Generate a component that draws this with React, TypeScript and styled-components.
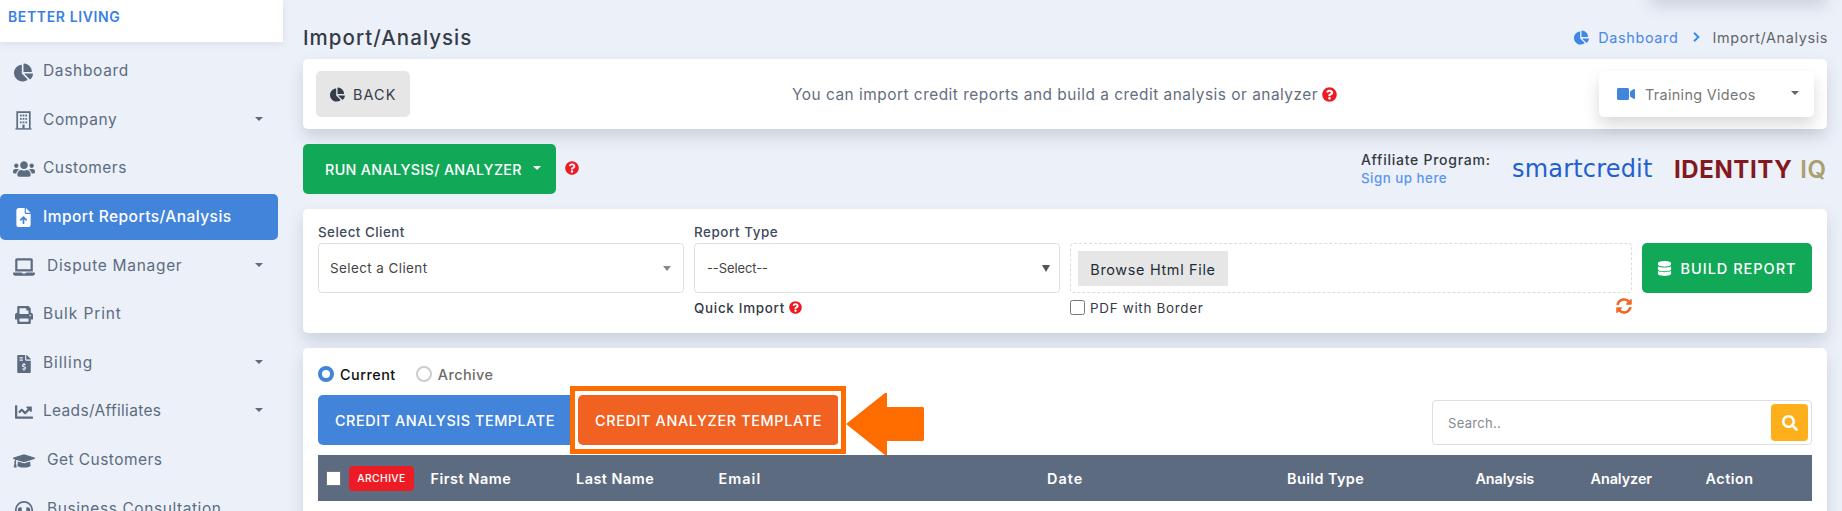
import React from 'react';
import styled, { createGlobalStyle, css } from 'styled-components';
import {
  FaChartLine, FaChartPie, FaDatabase, FaFileInvoiceDollar, FaGraduationCap,
  FaHeadset, FaLaptop, FaPrint, FaQuestionCircle, FaSearch, FaSyncAlt, FaUsers, FaVideo,
} from 'react-icons/fa';
import { FaFileArrowUp } from 'react-icons/fa6';

const Global = createGlobalStyle`
  *, *::before, *::after { box-sizing: border-box; }
  html, body { margin: 0; height: 100%; overflow: hidden; background: #ecf1f9; }
  body { font-family: Inter, "Liberation Sans", sans-serif; }
  button, input { font: inherit; margin: 0; }
  svg { display: block; flex: none; }
`;

const slate = '#5c6b80';
const blue = '#4384db';

interface TextProps { $size: number; $ls?: number; $weight?: number; $color?: string; }
const Text = styled.span<TextProps>`
  font-size: ${p => p.$size}px;
  letter-spacing: ${p => p.$ls ?? 0}px;
  font-weight: ${p => p.$weight ?? 400};
  color: ${p => p.$color ?? 'inherit'};
  white-space: nowrap;
`;

const Page = styled.div`
  position: relative;
  display: flex;
  width: 1842px;
  height: 511px;
  overflow: hidden;
`;

const TopShade = styled.div`
  position: absolute;
  top: -22px;
  left: 1650px;
  width: 176px;
  height: 20px;
  box-shadow: 0 8px 16px rgba(20, 30, 50, 0.15);
`;

const Sidebar = styled.aside`
  width: 283px;
  flex: none;
`;
const Brand = styled.div`
  height: 42px;
  padding: 8px 0 0 8px;
  line-height: 16px;
  background: #fff;
  box-shadow: 0 2px 8px rgba(0, 0, 0, 0.08);
`;
const Nav = styled.nav`
  display: flex;
  flex-direction: column;
  gap: 2.6px;
  padding-top: 6.2px;
`;
const NavItem = styled.a<{ $active?: boolean }>`
  display: flex;
  align-items: center;
  width: 278px;
  height: 46px;
  flex: none;
  padding: 0 15px 1px 12px;
  color: ${slate};
  ${p => p.$active && css`
    color: #fff;
    background: ${blue};
    border-radius: 5px;
  `}
`;
const NavIcon = styled.span<{ $gap: number }>`
  display: flex;
  justify-content: center;
  width: 23px;
  margin: 3px ${p => p.$gap}px 0 0;
`;
const Caret = styled.i<{ $w: number; $h: number; $color: string }>`
  width: 0;
  height: 0;
  flex: none;
  border: solid transparent;
  border-width: ${p => p.$h}px ${p => p.$w / 2}px 0;
  border-top-color: ${p => p.$color};
`;
const NavCaret = styled(Caret)`
  margin: -1px 0 0 auto;
`;

const Main = styled.main`
  width: 1544px;
  margin-right: 15px;
  padding-left: 20px;
  flex: none;
  display: flex;
  flex-direction: column;
  gap: 15px;
  > * { flex: none; }
`;
const TitleRow = styled.header`
  display: flex;
  align-items: center;
  justify-content: space-between;
  height: 59px;
  padding-top: 15px;
  margin-bottom: -15px;
`;
const Crumbs = styled.div`
  display: flex;
  align-items: center;
  margin-right: -1px;
  color: #5f646b;
  svg { color: #3d86ea; }
`;
const CrumbLink = styled(Text)`
  margin-left: 9px;
`;
const Chevron = styled.svg`
  margin: -1px 12px 0 15px;
`;
const Card = styled.section`
  background: #fff;
  border-radius: 5px;
  box-shadow: 0 8px 16px rgba(20, 30, 50, 0.15);
`;
const IntroCard = styled(Card)`
  display: flex;
  align-items: center;
  height: 70px;
  padding: 0 13px;
`;
const BackButton = styled.button`
  display: flex;
  align-items: center;
  gap: 8px;
  width: 94px;
  height: 46px;
  padding: 0 0 0 14px;
  border: 0;
  border-radius: 5px;
  background: #e6e6e6;
  color: #343c48;
`;
const Intro = styled.div`
  display: flex;
  align-items: center;
  gap: 4px;
  margin-left: 382px;
  color: #646e7d;
`;
const Help = styled(FaQuestionCircle)`
  color: #ed1c24;
`;
const VideosButton = styled.button`
  display: flex;
  align-items: center;
  width: 215px;
  height: 46px;
  margin-left: auto;
  padding: 0 15px 0 18px;
  border: 0;
  border-radius: 5px;
  background: #fff;
  color: #777;
  box-shadow: 0 8px 16px rgba(0, 0, 0, 0.15);
  svg { margin-right: 10px; color: ${blue}; }
  i { margin: -2px 0 0 auto; }
`;

const RunRow = styled.div`
  display: flex;
  align-items: center;
  height: 50px;
`;
const Solid = styled.button<{ $bg: string; $w: number }>`
  display: flex;
  align-items: center;
  justify-content: center;
  width: ${p => p.$w}px;
  height: 50px;
  flex: none;
  padding: 0;
  border: 0;
  border-radius: 5px;
  background: ${p => p.$bg};
  color: #fff;
`;
const RunButton = styled(Solid)`
  gap: 11px;
  padding-left: 7px;
  i { margin-top: -2px; }
`;
const AnalysisButton = styled(Solid)`
  padding-right: 6px;
`;
const RunHelp = styled(Help)`
  margin: -2px 0 0 9px;
`;
const Affiliate = styled.div`
  display: flex;
  flex-direction: column;
  margin-left: auto;
  width: 151px;
  line-height: 19px;
`;
const SmartCredit = styled(Text)`
  width: 162px;
  font-family: "DejaVu Sans", sans-serif;
`;
const IdentityLogo = styled.div`
  display: flex;
  gap: 8px;
  width: 153px;
`;

const FormCard = styled(Card)`
  display: flex;
  height: 124px;
  padding: 17px 15px 0;
`;
const Field = styled.div<{ $w: number; $mr: number }>`
  width: ${p => p.$w}px;
  margin-right: ${p => p.$mr}px;
  flex: none;
`;
const FieldLabel = styled.div`
  display: flex;
  height: 17px;
  line-height: 12px;
`;
const Select = styled.div<{ $pl: number; $pr: number }>`
  display: flex;
  align-items: center;
  justify-content: space-between;
  height: 50px;
  padding: 0 ${p => p.$pr}px 0 ${p => p.$pl}px;
  border: 1px solid #dfdfdf;
  border-radius: 4px;
  color: #444;
`;
const Below = styled.div<{ $gap: number }>`
  display: flex;
  align-items: center;
  gap: ${p => p.$gap}px;
  height: 29px;
  color: #343a46;
`;
const DropZone = styled.div`
  height: 50px;
  padding: 7px;
  border: 1px dashed #dcdcdc;
  border-radius: 4px;
`;
const Browse = styled.button`
  display: block;
  width: 150px;
  height: 35px;
  padding: 0;
  border: 0;
  background: #e6e6e6;
  color: #212b36;
`;
const Check = styled.span<{ $border: string; $radius: number }>`
  width: 15px;
  height: 15px;
  flex: none;
  border: 1px solid ${p => p.$border};
  border-radius: ${p => p.$radius}px;
  background: #fff;
`;
const RefreshIcon = styled(FaSyncAlt)`
  margin: -3px 0 0 auto;
  color: #f26522;
`;
const BuildButton = styled(Solid)`
  margin-top: 17px;
  gap: 8px;
`;

const ListCard = styled(Card)`
  height: 300px;
  padding: 17px 15px 0;
`;
const Radios = styled.div`
  display: flex;
  align-items: center;
  height: 18px;
`;
const Radio = styled.span<{ $on?: boolean; $ml?: number }>`
  width: 16px;
  height: 16px;
  margin: 0 6px 0 ${p => p.$ml ?? 0}px;
  border: ${p => (p.$on ? '4px solid ' + blue : '2px solid #ccc')};
  border-radius: 50%;
`;
const Tools = styled.div`
  display: flex;
  align-items: flex-start;
  height: 50px;
  margin-top: 12px;
`;
const Highlight = styled.div`
  position: relative;
`;
const Frame = styled.div`
  position: absolute;
  top: -9px;
  left: -8px;
  width: 276px;
  height: 68px;
  border: 5px solid #ff6c00;
  box-shadow: inset 0 0 0 3px #fff;
`;
const Arrow = styled.svg`
  position: absolute;
  top: -2px;
  left: 268px;
`;
const SearchBox = styled.div`
  display: flex;
  align-items: center;
  justify-content: space-between;
  width: 380px;
  height: 45px;
  margin: 5px 0 0 auto;
  padding: 0 3px 0 15px;
  border: 1px solid #dfdfdf;
  border-radius: 4px;
  color: #848a90;
`;
const SearchButton = styled.button`
  display: grid;
  place-items: center;
  width: 37px;
  height: 37px;
  padding: 0;
  border: 0;
  border-radius: 4px;
  background: #fdb01c;
  color: #fff;
`;
const HeadRow = styled.div`
  display: grid;
  grid-template-columns: 112.5px 145.5px 142.5px 328.5px 240px 188.5px 115px 115px auto;
  align-items: center;
  height: 46px;
  margin-top: 10px;
  background: ${slate};
  color: #fff;
`;
const PickCell = styled.div`
  display: flex;
  align-items: center;
  gap: 8px;
  padding-left: 8px;
`;
const ArchiveTag = styled.button`
  display: flex;
  align-items: center;
  justify-content: center;
  width: 65px;
  height: 25px;
  padding: 0;
  border: 0;
  border-radius: 4px;
  background: #ed1c24;
  color: #fff;
`;

const BuildingIcon = () => (
  <svg width="17" height="19" viewBox="0 0 17 19" fill="none" stroke="currentColor">
    <path d="M0.5 17.9h16" strokeWidth="1.4" />
    <path d="M2.2 17.5V1.2h12.6v16.3" strokeWidth="1.7" />
    <path d="M5.8 3.6v8.8M8.5 3.6v8.8M11.2 3.6v8.8" strokeWidth="1.7" strokeDasharray="1.8 1.6" />
    <path d="M8.5 13.6v4" strokeWidth="2.2" />
  </svg>
);

type Entry = { label: string; icon: React.ReactNode; ls: number; caret?: boolean; active?: boolean; wide?: boolean };
const entries: Entry[] = [
  { label: 'Dashboard', icon: <FaChartPie size={19} />, ls: 0.66 },
  { label: 'Company', icon: <BuildingIcon />, ls: 0.6, caret: true },
  { label: 'Customers', icon: <FaUsers size={22} />, ls: 0.48 },
  { label: 'Import Reports/Analysis', icon: <FaFileArrowUp size={19} />, ls: 0.45, active: true },
  { label: 'Dispute Manager', icon: <FaLaptop size={22} />, ls: 0.69, caret: true, wide: true },
  { label: 'Bulk Print', icon: <FaPrint size={18} />, ls: 0.89 },
  { label: 'Billing', icon: <FaFileInvoiceDollar size={18} />, ls: 0.9, caret: true },
  { label: 'Leads/Affiliates', icon: <FaChartLine size={18} />, ls: 0.32, caret: true },
  { label: 'Get Customers', icon: <FaGraduationCap size={22} />, ls: 0.45, wide: true },
  { label: 'Business Consultation', icon: <FaHeadset size={18} />, ls: 0.58, wide: true },
];

const columns: [string, number][] = [
  ['First Name', 0.56], ['Last Name', 0.51], ['Email', 1.05], ['Date', 1.06],
  ['Build Type', 0.42], ['Analysis', -0.1], ['Analyzer', -0.06], ['Action', 0.5],
];

export default function App() {
  return (
    <Page>
      <Global />
      <TopShade />
      <Sidebar>
        <Brand><Text $size={14} $ls={0.62} $weight={600} $color="#3a80e4">BETTER LIVING</Text></Brand>
        <Nav>
          {entries.map(e => (
            <NavItem key={e.label} $active={e.active}>
              <NavIcon $gap={e.wide ? 12 : 8}>{e.icon}</NavIcon>
              <Text $size={15.5} $ls={e.ls} $weight={e.active ? 500 : 400}>{e.label}</Text>
              {e.caret && <NavCaret $w={9} $h={4.5} $color={slate} />}
            </NavItem>
          ))}
        </Nav>
      </Sidebar>

      <Main>
        <TitleRow>
          <Text $size={20.5} $ls={1.02} $weight={500} $color="#343c48">Import/Analysis</Text>
          <Crumbs>
            <FaChartPie size={15} />
            <CrumbLink as="a" $size={14.4} $ls={0.68} $color="#4a86e8">Dashboard</CrumbLink>
            <Chevron width="7" height="10" viewBox="0 0 7 10" fill="none" stroke="currentColor" strokeWidth="1.9">
              <path d="M1 0.8 5.4 5 1 9.2" />
            </Chevron>
            <Text $size={14.4} $ls={0.64}>Import/Analysis</Text>
          </Crumbs>
        </TitleRow>

        <IntroCard>
          <BackButton><FaChartPie size={15} /><Text $size={14.4} $ls={1.13}>BACK</Text></BackButton>
          <Intro>
            <Text $size={15.4} $ls={0.51}>You can import credit reports and build a credit analysis or analyzer</Text>
            <Help size={15} />
          </Intro>
          <VideosButton>
            <FaVideo size={18} />
            <Text $size={14.4} $ls={0.33}>Training Videos</Text>
            <Caret $w={9} $h={4.5} $color="#666" />
          </VideosButton>
        </IntroCard>

        <RunRow>
          <RunButton $bg="#11a958" $w={253}>
            <Text $size={14.3} $ls={0.32} $weight={500}>RUN ANALYSIS/ ANALYZER</Text>
            <Caret $w={8} $h={4} $color="#fff" />
          </RunButton>
          <RunHelp size={14} />
          <Affiliate>
            <Text $size={14} $ls={0.74} $weight={500} $color="#343a40">Affiliate Program:</Text>
            <Text as="a" $size={13.3} $ls={0.51} $weight={500} $color="#5b95ec">Sign up here</Text>
          </Affiliate>
          <SmartCredit $size={24} $ls={0.19} $color="#2160cd">smartcredit</SmartCredit>
          <IdentityLogo>
            <Text $size={24} $ls={0.6} $weight={700} $color="#841820">IDENTITY</Text>
            <Text $size={24} $ls={0.5} $weight={600} $color="#ab9e70">IQ</Text>
          </IdentityLogo>
        </RunRow>

        <FormCard>
          <Field $w={366} $mr={10}>
            <FieldLabel><Text $size={13.4} $ls={0.47} $weight={500} $color="#3d4a5e">Select Client</Text></FieldLabel>
            <Select $pl={11} $pr={12}>
              <Text $size={13.4} $ls={0.44}>Select a Client</Text>
              <Caret $w={8} $h={5} $color="#888" />
            </Select>
          </Field>
          <Field $w={366} $mr={10}>
            <FieldLabel><Text $size={13.4} $ls={0.56} $weight={500} $color="#3d4a5e">Report Type</Text></FieldLabel>
            <Select $pl={12} $pr={9}>
              <Text $size={13} $ls={-0.11}>--Select--</Text>
              <Caret $w={8} $h={7} $color="#555" />
            </Select>
            <Below $gap={4}>
              <Text $size={13.4} $ls={0.72} $weight={500}>Quick Import</Text>
              <Help size={13} />
            </Below>
          </Field>
          <Field $w={562} $mr={10}>
            <FieldLabel />
            <DropZone><Browse><Text $size={14.4} $ls={0.68}>Browse Html File</Text></Browse></DropZone>
            <Below $gap={5}>
              <Check $border="#767676" $radius={2.5} />
              <Text $size={13.4} $ls={0.71}>PDF with Border</Text>
              <RefreshIcon size={16} />
            </Below>
          </Field>
          <BuildButton $bg="#11a958" $w={170}>
            <FaDatabase size={15} />
            <Text $size={14.5} $ls={1} $weight={500}>BUILD REPORT</Text>
          </BuildButton>
        </FormCard>

        <ListCard>
          <Radios>
            <Radio $on />
            <Text $size={14.4} $ls={0.5} $weight={500} $color="#111">Current</Text>
            <Radio $ml={20} />
            <Text $size={14.4} $ls={0.45} $weight={500} $color="#6c6c6c">Archive</Text>
          </Radios>
          <Tools>
            <AnalysisButton $bg={blue} $w={260}>
              <Text $size={14.4} $ls={0.55} $weight={500}>CREDIT ANALYSIS TEMPLATE</Text>
            </AnalysisButton>
            <Highlight>
              <Frame />
              <Arrow width="78" height="62" viewBox="0 0 78 62" fill="#ff6c00">
                <path d="M0 31 39 0h2v14h36l1 1v32l-1 1H41v14h-2z" />
              </Arrow>
              <Solid $bg="#f06122" $w={261}>
                <Text $size={14.4} $ls={0.65} $weight={500}>CREDIT ANALYZER TEMPLATE</Text>
              </Solid>
            </Highlight>
            <SearchBox>
              <Text $size={13} $ls={0.3}>Search..</Text>
              <SearchButton><FaSearch size={16} /></SearchButton>
            </SearchBox>
          </Tools>
          <HeadRow>
            <PickCell>
              <Check $border="#767676" $radius={1} />
              <ArchiveTag><Text $size={10.3} $ls={0.42} $weight={500}>ARCHIVE</Text></ArchiveTag>
            </PickCell>
            {columns.map(([name, ls]) => (
              <Text key={name} $size={14.4} $ls={ls} $weight={600}>{name}</Text>
            ))}
          </HeadRow>
        </ListCard>
      </Main>
    </Page>
  );
}
